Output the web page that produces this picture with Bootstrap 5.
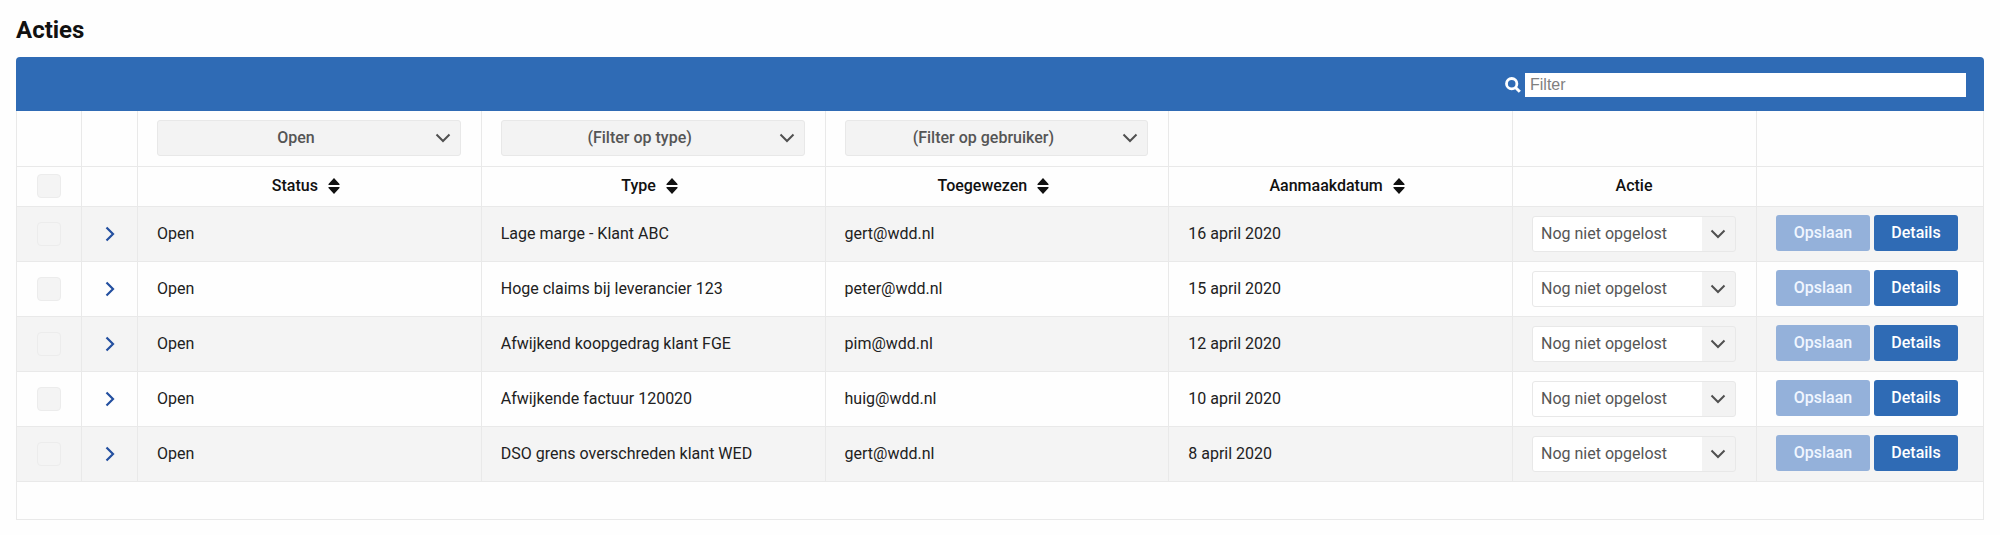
<!DOCTYPE html>
<html lang="nl">
<head>
<meta charset="utf-8">
<meta name="viewport" content="width=device-width, initial-scale=1">
<title>Acties</title>
<link href="https://cdn.jsdelivr.net/npm/bootstrap@5.3.0/dist/css/bootstrap.min.css" rel="stylesheet">
<style>
  :root { --brand: #2f6bb5; --line: #e9e9e9; --soft: #f4f4f4; }
  body { font-family: Roboto, sans-serif; font-size: 16px; line-height: 24px; color: #212121; background: #fefefe; }
  .page-title { font-size: 24px; line-height: 29px; font-weight: 700; color: #111; }
  .toolbar { background: var(--brand); height: 54px; border-radius: 4px 4px 0 0; padding: 2px 18px 0 0; }
  .search-box { width: 441px; height: 24px; border: 0; border-radius: 0; padding: 0 5px; background: #fff; font-family: "Liberation Sans", sans-serif; font-size: 16px; line-height: 24px; }
  .search-box::placeholder { color: #808080; opacity: 1; }
  .grid-table { table-layout: fixed; min-width: 1100px; --bs-table-bg: transparent; color: inherit; border-color: var(--line); }
  .grid-table > :not(caption) > * > * { padding: 0 20px 0 19px; vertical-align: middle; border: 1px solid var(--line); color: inherit; box-shadow: none; }
  .grid-table > thead > tr:first-child > * { border-top: 0; }
  .grid-table > tbody > tr { height: 55px; }
  .grid-table > tbody > tr:nth-child(odd) > td { background: var(--soft); }
  .grid-table .filters { height: 55px; }
  .grid-table .filters > td { padding-top: 9px; vertical-align: top; }
  .grid-table .titles { height: 40px; }
  .grid-table .titles th { font-weight: 500; color: #111; }
  .grid-table > tfoot > tr { height: 38px; }
  .grid-table > :not(caption) > * > .tight { padding: 0; text-align: center; }
  .grid-table > :not(caption) > * > .actions { padding: 0 0 2px 19px; white-space: nowrap; }
  .tick { width: 24px; height: 24px; border: 1px solid #ececec; border-radius: 4px; background-color: var(--soft); vertical-align: middle; margin: 0; }
  .form-select { font-size: 16px; line-height: 24px; color: #555; border: 1px solid #e8e8e8; border-radius: 3px; height: 36px; padding: 0 34px 0 8px;
    background-image: url("data:image/svg+xml,%3Csvg xmlns='http://www.w3.org/2000/svg' viewBox='0 0 16 10'%3E%3Cpath d='M1.5 1.5 8 8l6.500-6.500' fill='none' stroke='%23505050' stroke-width='2'/%3E%3C/svg%3E");
    background-size: 16px 10px; background-position: right 9px center; }
  .filter-select { background-color: #f3f3f3; font-weight: 500; text-align-last: center; }
  .state-select { background-color: #fff;
    background-image: url("data:image/svg+xml,%3Csvg xmlns='http://www.w3.org/2000/svg' viewBox='0 0 33 34'%3E%3Cpath d='M0 0h33v34H0z' fill='%23f3f3f3'/%3E%3Cpath d='M9.500 13.500 16 20l6.500-6.500' fill='none' stroke='%23505050' stroke-width='2'/%3E%3C/svg%3E");
    background-size: 33px 34px; background-position: right center; }
  .expander { border: 0; background: none; padding: 4px; line-height: 0; color: #2450a0; }
  .sorter { border: 0; background: none; padding: 0 6px 0 0; gap: 10px; font-weight: 500; color: inherit; }
  .btn-grid { height: 36px; font-size: 16px; line-height: 24px; padding: 0; border: 0; border-radius: 3px; color: #fff; background: var(--brand); font-weight: 500; }
  .btn-grid:disabled { background: #94b1da; color: #f0f6ff; opacity: 1; }
  .btn-save { width: 94px; }
  .btn-details { width: 84px; }
</style>
</head>
<body>
<svg class="d-none" aria-hidden="true">
  <symbol id="i-next" viewBox="0 0 10 16"><path d="M1.500 1.500 8 8l-6.500 6.500" fill="none" stroke="currentColor" stroke-width="2.200"/></symbol>
  <symbol id="i-sort" viewBox="0 0 12 16"><path d="M6 0 11.500 6Q12 7 11 7H1Q0 7 .5 6zM6 16 .5 10Q0 9 1 9h10q1 0 .5 1z" fill="currentColor"/></symbol>
  <symbol id="i-search" viewBox="0 0 16 16"><circle cx="6.700" cy="6.700" r="5.200" fill="none" stroke="currentColor" stroke-width="2.800"/><path d="m10.500 10.500 4.300 4.300" stroke="currentColor" stroke-width="3"/></symbol>
</svg>
<main class="px-3 pb-3">
  <h1 class="page-title mb-0 pt-3 pb-2">Acties</h1>
  <section class="mt-1">
    <div class="toolbar d-flex align-items-center justify-content-end">
      <label for="search" class="text-white d-flex me-1" aria-label="Filter"><svg width="16" height="16"><use href="#i-search"/></svg></label>
      <input id="search" class="search-box" type="search" placeholder="Filter">
    </div>
    <table class="table grid-table mb-0">
      <colgroup><col style="width:65px"><col style="width:56px"><col><col><col><col><col style="width:244px"><col style="width:227px"></colgroup>
      <thead>
        <tr class="filters">
          <td></td><td></td>
          <td><select class="form-select filter-select" aria-label="Status"><option>Open</option></select></td>
          <td><select class="form-select filter-select" aria-label="Type"><option>(Filter op type)</option></select></td>
          <td><select class="form-select filter-select" aria-label="Toegewezen"><option>(Filter op gebruiker)</option></select></td>
          <td></td><td></td><td></td>
        </tr>
        <tr class="titles text-center">
          <td class="tight"><input class="form-check-input tick" type="checkbox" aria-label="Alles"></td>
          <td></td>
          <th scope="col"><button class="sorter d-inline-flex align-items-center">Status <svg width="12" height="16"><use href="#i-sort"/></svg></button></th>
          <th scope="col"><button class="sorter d-inline-flex align-items-center">Type <svg width="12" height="16"><use href="#i-sort"/></svg></button></th>
          <th scope="col"><button class="sorter d-inline-flex align-items-center">Toegewezen <svg width="12" height="16"><use href="#i-sort"/></svg></button></th>
          <th scope="col"><button class="sorter d-inline-flex align-items-center">Aanmaakdatum <svg width="12" height="16"><use href="#i-sort"/></svg></button></th>
          <th scope="col">Actie</th>
          <td></td>
        </tr>
      </thead>
      <tbody>
        <tr>
          <td class="tight"><input class="form-check-input tick" type="checkbox" aria-label="Rij 1"></td>
          <td class="tight"><button class="expander" aria-label="Uitklappen"><svg width="10" height="16"><use href="#i-next"/></svg></button></td>
          <td>Open</td><td>Lage marge - Klant ABC</td><td>gert@wdd.nl</td><td>16 april 2020</td>
          <td><select class="form-select state-select" aria-label="Actie"><option>Nog niet opgelost</option></select></td>
          <td class="actions"><div class="d-flex gap-1"><button class="btn btn-grid btn-save" disabled>Opslaan</button><button class="btn btn-grid btn-details">Details</button></div></td>
        </tr>
        <tr>
          <td class="tight"><input class="form-check-input tick" type="checkbox" aria-label="Rij 2"></td>
          <td class="tight"><button class="expander" aria-label="Uitklappen"><svg width="10" height="16"><use href="#i-next"/></svg></button></td>
          <td>Open</td><td>Hoge claims bij leverancier 123</td><td>peter@wdd.nl</td><td>15 april 2020</td>
          <td><select class="form-select state-select" aria-label="Actie"><option>Nog niet opgelost</option></select></td>
          <td class="actions"><div class="d-flex gap-1"><button class="btn btn-grid btn-save" disabled>Opslaan</button><button class="btn btn-grid btn-details">Details</button></div></td>
        </tr>
        <tr>
          <td class="tight"><input class="form-check-input tick" type="checkbox" aria-label="Rij 3"></td>
          <td class="tight"><button class="expander" aria-label="Uitklappen"><svg width="10" height="16"><use href="#i-next"/></svg></button></td>
          <td>Open</td><td>Afwijkend koopgedrag klant FGE</td><td>pim@wdd.nl</td><td>12 april 2020</td>
          <td><select class="form-select state-select" aria-label="Actie"><option>Nog niet opgelost</option></select></td>
          <td class="actions"><div class="d-flex gap-1"><button class="btn btn-grid btn-save" disabled>Opslaan</button><button class="btn btn-grid btn-details">Details</button></div></td>
        </tr>
        <tr>
          <td class="tight"><input class="form-check-input tick" type="checkbox" aria-label="Rij 4"></td>
          <td class="tight"><button class="expander" aria-label="Uitklappen"><svg width="10" height="16"><use href="#i-next"/></svg></button></td>
          <td>Open</td><td>Afwijkende factuur 120020</td><td>huig@wdd.nl</td><td>10 april 2020</td>
          <td><select class="form-select state-select" aria-label="Actie"><option>Nog niet opgelost</option></select></td>
          <td class="actions"><div class="d-flex gap-1"><button class="btn btn-grid btn-save" disabled>Opslaan</button><button class="btn btn-grid btn-details">Details</button></div></td>
        </tr>
        <tr>
          <td class="tight"><input class="form-check-input tick" type="checkbox" aria-label="Rij 5"></td>
          <td class="tight"><button class="expander" aria-label="Uitklappen"><svg width="10" height="16"><use href="#i-next"/></svg></button></td>
          <td>Open</td><td>DSO grens overschreden klant WED</td><td>gert@wdd.nl</td><td>8 april 2020</td>
          <td><select class="form-select state-select" aria-label="Actie"><option>Nog niet opgelost</option></select></td>
          <td class="actions"><div class="d-flex gap-1"><button class="btn btn-grid btn-save" disabled>Opslaan</button><button class="btn btn-grid btn-details">Details</button></div></td>
        </tr>
      </tbody>
      <tfoot><tr><td colspan="8"></td></tr></tfoot>
    </table>
  </section>
</main>
<script src="https://cdn.jsdelivr.net/npm/bootstrap@5.3.0/dist/js/bootstrap.bundle.min.js"></script>
</body>
</html>
